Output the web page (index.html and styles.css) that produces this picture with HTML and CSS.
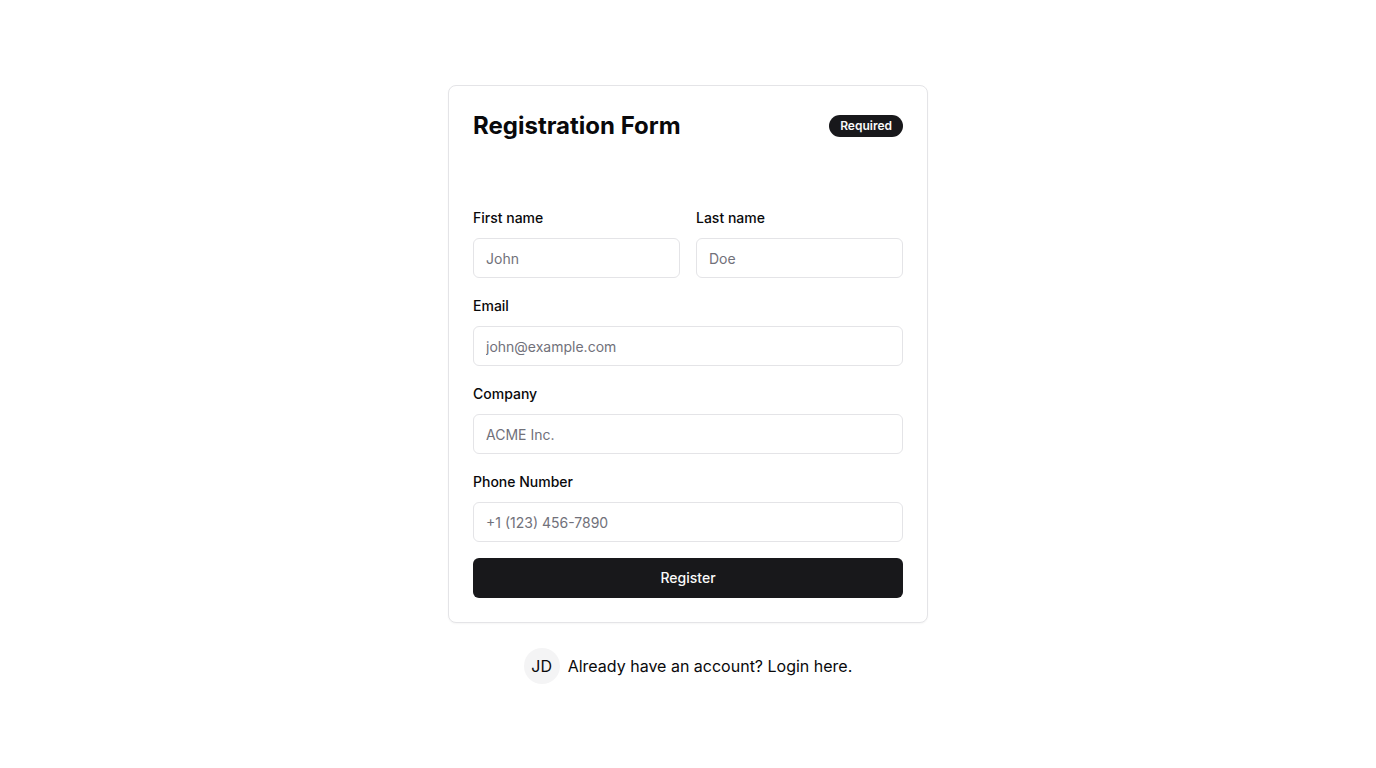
FILE: index.html
```html
<!DOCTYPE html>
<html lang="en">
<head>
<meta charset="utf-8">
<title>Registration Form</title>
<link rel="stylesheet" href="styles.css">
</head>
<body>
<main class="page">
  <section class="card">
    <header class="card-header">
      <h1 class="title">Registration Form</h1>
      <span class="badge">Required</span>
    </header>
    <form class="form">
      <div class="row">
        <div class="field">
          <label class="label" for="first">First name</label>
          <input class="input" id="first" placeholder="John">
        </div>
        <div class="field">
          <label class="label" for="last">Last name</label>
          <input class="input" id="last" placeholder="Doe">
        </div>
      </div>
      <div class="field">
        <label class="label" for="email">Email</label>
        <input class="input" id="email" placeholder="john@example.com">
      </div>
      <div class="field">
        <label class="label" for="company">Company</label>
        <input class="input" id="company" placeholder="ACME Inc.">
      </div>
      <div class="field">
        <label class="label" for="phone">Phone Number</label>
        <input class="input" id="phone" placeholder="+1 (123) 456-7890">
      </div>
      <button class="button" type="button">Register</button>
    </form>
  </section>
  <footer class="footer">
    <span class="avatar">JD</span>
    <span class="footer-text">Already have an account? Login here.</span>
  </footer>
</main>
</body>
</html>
```

FILE: styles.css
```css
* { box-sizing: border-box; }
html, body { margin: 0; padding: 0; }
body {
  font-family: Inter, "Liberation Sans", sans-serif;
  color: #09090b;
  background: #ffffff;
}
.page {
  min-height: 100vh;
  display: flex;
  flex-direction: column;
  align-items: center;
  justify-content: center;
  gap: 25px;
}
.card {
  width: 480px;
  border: 1px solid #e4e4e7;
  border-radius: 8px;
  box-shadow: 0 1px 2px rgba(0,0,0,0.04);
  padding: 24px;
  background: #fff;
}
.card-header {
  display: flex;
  align-items: center;
  justify-content: space-between;
  height: 32px;
  margin-bottom: 66px;
}
.title {
  margin: 0;
  font-size: 24px;
  line-height: 32px;
  font-weight: 700;
  letter-spacing: 0;
}
.badge {
  display: inline-flex;
  align-items: center;
  height: 22px;
  padding: 0 11px;
  border-radius: 999px;
  background: #18181b;
  color: #fafafa;
  font-size: 12px;
  font-weight: 600;
}
.form {
  display: flex;
  flex-direction: column;
  gap: 18px;
}
.row {
  display: grid;
  grid-template-columns: 1fr 1fr;
  gap: 16px;
}
.field {
  display: flex;
  flex-direction: column;
  gap: 10px;
}
.label {
  font-size: 14px;
  line-height: 20px;
  font-weight: 500;
}
.input {
  height: 40px;
  width: 100%;
  border: 1px solid #e4e4e7;
  border-radius: 6px;
  padding: 2px 12px 0;
  font-family: inherit;
  font-size: 14px;
  color: #09090b;
  background: #fff;
  outline: none;
}
.input::placeholder { color: #71717a; }
.button {
  margin-top: -2px;
  height: 40px;
  width: 100%;
  border: none;
  border-radius: 6px;
  background: #18181b;
  color: #fafafa;
  font-family: inherit;
  font-size: 14px;
  font-weight: 500;
}
.footer {
  display: flex;
  align-items: center;
  gap: 8px;
}
.avatar {
  width: 36px;
  height: 36px;
  border-radius: 50%;
  background: #f4f4f5;
  display: inline-flex;
  align-items: center;
  justify-content: center;
  font-size: 16px;
}
.footer-text {
  font-size: 16px;
}
```
